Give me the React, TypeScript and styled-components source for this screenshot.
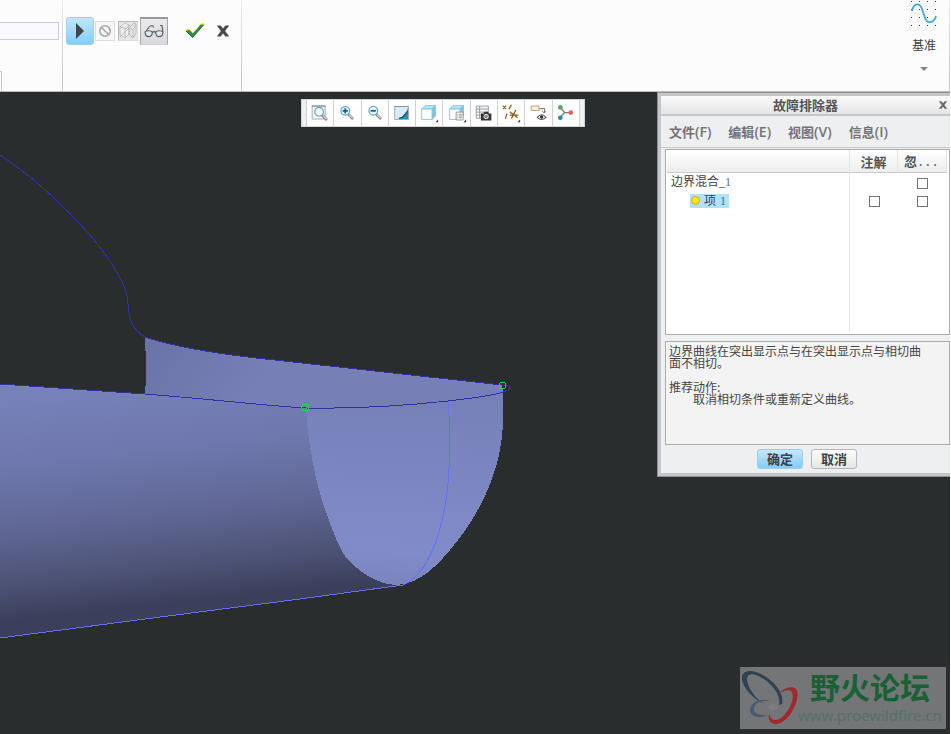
import React from "react";
import styled, { createGlobalStyle, css } from "styled-components";

const GlobalStyle = createGlobalStyle`
  * { box-sizing: border-box; }
  html, body, #root { height: 100%; }
  body {
    margin: 0;
    overflow: hidden;
    background: #fff;
    color: #3f3f3f;
    font-family: "Noto Sans CJK SC", sans-serif;
    font-size: 12px;
  }
  button, input { font: inherit; color: inherit; margin: 0; padding: 0; }
`;

const Page = styled.div`
  display: flex;
  flex-direction: column;
  height: 100%;
  padding-right: 1px;
`;

/* ---------- ribbon ---------- */

const Ribbon = styled.header`
  display: flex;
  flex: none;
  height: 92px;
  background: #fcfcfc;
  border-bottom: 1px solid #b9bcbe;
`;

const RibbonGroup = styled.div<{ $width?: number; $push?: boolean }>`
  display: flex;
  flex: none;
  align-items: flex-start;
  ${(p) => p.$width && `width: ${p.$width}px;`}
  ${(p) => p.$push && "margin-left: auto;"}
  border-right: 1px solid;
  border-image: linear-gradient(#ececef, #c9cacc 80%) 1;
`;

const FieldColumn = styled.div`
  display: flex;
  flex-direction: column;
  justify-content: space-between;
  align-items: flex-start;
  width: 59px;
  height: 91px;
  padding-top: 22px;
`;

const ReferenceField = styled.input`
  width: 100%;
  height: 18px;
  border: 1px solid #cccdd5;
  border-left: 0;
  background: #f9f7ff;
`;

const TabEdge = styled.div`
  width: 2px;
  height: 20px;
  border-top: 1px solid #c9cacc;
  border-right: 1px solid #c9cacc;
`;

const Commands = styled(RibbonGroup)`
  width: 179px;
  align-items: center;
  height: 91px;
  padding: 0 0 29px 3px;
`;

const CommandButton = styled.button<{ $kind: "primary" | "small" | "inset" | "pressed" | "plain" }>`
  display: grid;
  place-items: center;
  flex: none;
  width: 28px;
  height: 28px;
  border: 0;
  background: none;
  ${(p) => p.$kind === "primary" && css`
    border: 1px solid #97d0f0;
    border-radius: 3px;
    background: linear-gradient(#c3e6fb, #84cefb);
  `}
  ${(p) => p.$kind === "small" && css`
    width: 20px;
    height: 20px;
    margin: 0 3px 0 1px;
    border: 1px solid #dcdcde;
    background: #f6f6f7;
  `}
  ${(p) => p.$kind === "inset" && css`
    width: 20px;
    height: 20px;
    margin-right: 2px;
    border: 1px solid #b6b6b8;
    border-right-color: #dcdcde;
    border-bottom-color: #dcdcde;
    background: #e6e6e7;
  `}
  ${(p) => p.$kind === "pressed" && css`
    margin-right: 13px;
    border: 1px solid #a6a6a8;
    border-top: 2px solid #98989a;
    border-bottom-color: #d0d0d4;
    background: linear-gradient(#e9e9ea, #d9d9df);
  `}
`;

const DatumButton = styled.button`
  display: flex;
  flex-direction: column;
  align-items: center;
  width: 50px;
  border: 0;
  background: none;
  line-height: 16px;
`;

const DatumLabel = styled.span`
  margin: 10px 0 13px;
`;

/* ---------- graphics area ---------- */

const Viewport = styled.main`
  position: relative;
  flex: 1;
  min-height: 0;
  background: #292d2d;
`;

const Model = styled.svg`
  display: block;
  width: 100%;
  height: 100%;
`;

const ViewToolbar = styled.div`
  position: absolute;
  top: 7px;
  left: 301px;
  display: grid;
  grid-template-columns: 4px repeat(10, 1fr) 5px;
  width: 284px;
  height: 28px;
  border: 1px solid #d3d4d8;
  background: #eff0f3;
`;

const ToolButton = styled.button`
  display: grid;
  place-items: center;
  border: 0;
  border-left: 1px solid #cfd0d5;
  background: #fff;
`;

const ToolbarEnd = styled.span<{ $lined?: boolean }>`
  border-left: ${(p) => (p.$lined ? "1px solid #cfd0d5" : "0")};
`;

const Watermark = styled.div`
  position: absolute;
  right: 4px;
  bottom: 5px;
  display: flex;
  width: 206px;
  height: 62px;
  background: #737577;
`;

const WatermarkText = styled.div`
  display: flex;
  flex-direction: column;
  align-items: center;
  white-space: nowrap;
`;

const ForumName = styled.span`
  color: #1a6035;
  font-size: 30px;
  font-weight: 700;
  line-height: 38px;
`;

const ForumLink = styled.a`
  color: #54716b;
  font-family: "Noto Sans", sans-serif;
  font-size: 15px;
  line-height: 20px;
  text-decoration: none;
`;

/* ---------- troubleshooter dialog ---------- */

const Dialog = styled.section`
  position: absolute;
  top: 0;
  right: 0;
  display: flex;
  flex-direction: column;
  width: 293px;
  border: 1px solid #8e8f92;
  border-right: 0;
  background: #c5c6c9;
  padding: 3px 0 3px 3px;
`;

const TitleBar = styled.div`
  display: flex;
  align-items: center;
  height: 20px;
  padding-right: 2px;
  border-bottom: 2px solid #c5c6c9;
  background: linear-gradient(#fbfbfb, #e4e5e7);
`;

const Title = styled.h1`
  flex: 1;
  margin: 0;
  padding-left: 12px;
  color: #555457;
  font-size: 13px;
  font-weight: 700;
  line-height: 18px;
  text-align: center;
`;

const CloseButton = styled.button`
  display: grid;
  place-items: center;
  width: 10px;
  height: 18px;
  border: 0;
  background: none;
  opacity: 0.8;
`;

const MenuBar = styled.nav`
  display: flex;
  align-items: center;
  gap: 17px;
  height: 32px;
  padding-left: 8px;
  border-bottom: 1px solid #c6c8cb;
  background: #edeff1;
`;

const MenuItem = styled.button`
  border: 0;
  background: none;
  color: #757377;
  font-family: "Noto Sans CJK SC", sans-serif;
  font-size: 13px;
  font-weight: 700;
  line-height: 20px;
`;

const MenuKey = styled.span`
  font-family: "Open Sans", sans-serif;
  font-size: 14px;
  font-weight: 600;
`;

const DialogBody = styled.div`
  display: flex;
  flex-direction: column;
  padding: 1px 0 4px 4px;
  background: #edeff1;
`;

const TreeFrame = styled.div`
  height: 186px;
  padding: 0 2px 2px 1px;
  border: 1px solid #a9abae;
  background: #fff;
`;

const Tree = styled.table`
  width: 100%;
  height: 100%;
  border-collapse: separate;
  border-spacing: 0;
  table-layout: fixed;
`;

const HeadCell = styled.th<{ $width?: number; $start?: boolean }>`
  ${(p) => p.$width && `width: ${p.$width}px;`}
  height: 22px;
  padding: 2px 0 0 ${(p) => (p.$start ? 6 : 0)}px;
  border-right: 1px solid #e2e3e5;
  border-bottom: 1px solid #c9cbcd;
  background: linear-gradient(#fff, #ededee);
  color: #555457;
  font-size: 13px;
  font-weight: 700;
  line-height: 18px;
  text-align: ${(p) => (p.$start ? "left" : "center")};
  white-space: nowrap;
`;

const Dots = styled.span`
  font-family: "Liberation Mono", monospace;
  font-weight: 400;
  font-size: 12px;
`;

const Cell = styled.td<{ $ruled?: boolean; $indent?: number; $fill?: boolean }>`
  height: ${(p) => (p.$fill ? "auto" : "18px")};
  padding: 0 0 0 ${(p) => p.$indent ?? 0}px;
  border-right: ${(p) => (p.$ruled ? "1px solid #e8e8e9" : "0")};
  text-align: ${(p) => (p.$indent ? "left" : "center")};
  line-height: 14px;
  font-family: "Liberation Serif", "Noto Sans CJK SC", serif;
`;

const SelectedItem = styled.span`
  display: inline-flex;
  align-items: center;
  gap: 4px;
  height: 14px;
  padding: 0 3px 0 1px;
  background: #b1e2fc;
  vertical-align: middle;
`;

const Digit = styled.span`
  color: #3d6f9c;
`;

const Bullet = styled.span`
  width: 9px;
  height: 9px;
  border: 1px solid #f09a12;
  border-radius: 50%;
  background: #ffe81c;
`;

const Tick = styled.input`
  display: block;
  width: 11px;
  height: 11px;
  && { margin: 2px auto 0; }
  border: 1px solid #737375;
  background: #fff;
  appearance: none;
`;

const Message = styled.div`
  height: 104px;
  margin: 6px 0 4px;
  padding: 3px;
  border: 1px solid #a9abae;
  background: #f3f3f3;
  color: #454545;
  line-height: 12px;
`;

const Paragraph = styled.p<{ $indent?: boolean }>`
  max-width: 256px;
  margin: 0;
  padding-left: ${(p) => (p.$indent ? "24px" : "0")};
`;

const Advice = styled.div`
  margin-top: 12px;
`;

const Actions = styled.div`
  display: flex;
  justify-content: center;
  gap: 8px;
  padding-right: 1px;
`;

const ActionButton = styled.button<{ $primary?: boolean }>`
  width: 46px;
  height: 20px;
  border: 1px solid ${(p) => (p.$primary ? "#9dcbe8" : "#b5b6b8")};
  border-radius: 3px;
  background: ${(p) => (p.$primary ? "linear-gradient(#c5e7fb, #82cdfb)" : "linear-gradient(#fdfdfd, #e6e6e7)")};
  color: #3f4246;
  font-size: 13px;
  font-weight: 700;
  line-height: 18px;
`;

/* ---------- drawings ---------- */

const Cross = ({ size, width }: { size: number; width: number }) => (
  <svg width={size} height={size} viewBox="0 0 12 12">
    <path d="M1 1.500h3L6 4l2-2.500h3L7.600 6 11 10.500H8L6 8l-2 2.500H1L4.400 6z" fill="#48484a" stroke="#48484a" strokeWidth={width} />
  </svg>
);

const GlassesIcon = () => (
  <svg width="20" height="16" viewBox="0 0 20 16" fill="#dfe8ef" stroke="#5a5b5e" strokeWidth="1.200">
    <path d="M2 8C3.500 4.500 5.500 2 8 1.500c1.200 0 1.500 1 1.500 2" fill="none" />
    <path d="M18.800 7.500L18 1.500h-2" fill="none" />
    <path d="M1 8C2 6.300 7.500 6.300 8.300 8c.6 6-7 6.500-7.300 0zM11.700 8c.8-1.700 6.300-1.700 7.300 0-.3 6.500-7.900 6-7.300 0z" />
    <path d="M8.300 8.500c1-1 2.400-1 3.400 0" fill="none" />
  </svg>
);

const PatchIcon = () => (
  <svg width="18" height="18" viewBox="0 0 18 18" fill="none" stroke="#b3b3b5" strokeWidth=".8">
    <path d="M1 5l5-4 4 2-3 4-6-2v8l5 3 4-4V3M6 7v9" fill="#efeff0" />
    <path d="M10 6l5-5 2 1v9l-3 5-4-4zM14 8l3-6M14 8v8M10 6l4 2M1 15L13 3" />
  </svg>
);

const CheckIcon = () => (
  <svg width="20" height="16" viewBox="0 0 20 16">
    <path d="M1 8l3-1 4 4L16 1.500h3L7.500 14.500z" fill="#2d9352" stroke="#153f22" strokeWidth=".8" />
    <path d="M1 7.200l3-1M16 1h3" fill="none" stroke="#e7ed21" strokeWidth="1.500" />
    <path d="M4 6.500L8 10.300 16 1" fill="none" stroke="#c5dc2b" strokeWidth=".8" />
  </svg>
);

const DatumIcon = () => (
  <svg width="26" height="27" viewBox="0 0 26 27">
    {[1, 9, 17, 25].map((y) => [0, 8, 16, 24].map((x) => (
      <rect key={`${x}-${y}`} x={x} y={y} width="1" height="1" fill="#333" />
    )))}
    <path d="M1 11C3 2 9 3 11 9c3 9 4 14 8 13 3 0 5-2 6-6" fill="none" stroke="#3fabd6" strokeWidth="1.800" />
  </svg>
);

const Lens = ({ sign }: { sign: "plus" | "minus" | "none" }) => (
  <g>
    <path d="M11 11l5.500 5.500" stroke="#88898c" strokeWidth="3.200" />
    <path d="M12 11.500l4 4" stroke="#e3e3e4" strokeWidth="1.200" />
    <circle cx="7.500" cy="7" r="5" fill="#eefaff" stroke="#5b9dbc" strokeWidth="1.300" />
    {sign !== "none" && <path d={sign === "plus" ? "M4.500 7h6M7.500 4v6" : "M4.500 7h6"} stroke="#0b5d8e" strokeWidth="2" />}
  </g>
);

const Flyout = () => <path d="M21 18v3h-3z" fill="#333" />;

const CubeShape = () => (
  <g stroke="#86c1da">
    <path d="M2 6l4-4h12l-4 4z" fill="#b7e6f3" />
    <path d="M14 6l4-4v12l-4 4z" fill="#7cc3de" />
    <path d="M2 6h12v12H2z" fill="#fafeff" />
  </g>
);

const toolIcons: { name: string; icon: React.ReactNode }[] = [
  {
    name: "重新调整",
    icon: <><path d="M1.500 2.500h15v15h-15z" fill="#f5f5f5" stroke="#a3a3a5" /><path d="M1 2.500h16" stroke="#77787b" /><g transform="translate(2 2)"><Lens sign="none" /></g></>,
  },
  { name: "放大", icon: <g transform="translate(1 1)"><Lens sign="plus" /></g> },
  { name: "缩小", icon: <g transform="translate(1 1)"><Lens sign="minus" /></g> },
  {
    name: "重画",
    icon: <><path d="M2 3h16v15H2z" fill="#d5edf6" stroke="#9ca3a8" /><path d="M17.500 4v13.500H6C12 15 16 10 17.500 4z" fill="#328bb3" /><path d="M2 3h16" stroke="#898c90" /><path d="M7 16.500l4-1 6-7" fill="none" stroke="#1c4054" strokeWidth="1.300" /></>,
  },
  { name: "显示样式", icon: <><CubeShape /><Flyout /></> },
  {
    name: "已保存方向",
    icon: <><CubeShape /><path d="M9.500 9.500h8v9h-8z" fill="#fff" stroke="#888" /><path d="M11 12h1m1 0h3M11 14h1m1 0h3M11 16h1m1 0h3" stroke="#777" /><Flyout /></>,
  },
  {
    name: "视图管理器",
    icon: <><path d="M1.500 2.500h14v14h-14zM1.500 6h14M1.500 9.500h14M1.500 13h14M5.500 2.500v14" fill="#f5f5f5" stroke="#939597" /><path d="M7 11h3l1-2h4l1 2h3v8H7z" fill="#343538" /><circle cx="13" cy="14.500" r="2.500" fill="#888" stroke="#fff" /></>,
  },
  {
    name: "基准显示",
    icon: <><path d="M1 2l4 4M5 2L1 6M11 1L8 6M6 11l-2 6M9 9l9 7M9 13h10M16 7l-5 10" fill="none" stroke="#87601d" strokeWidth="1.500" /><Flyout /></>,
  },
  {
    name: "注释显示",
    icon: <><path d="M1.500 2.500h9v5h-9z" fill="#fff4d2" stroke="#a29572" /><path d="M11 5.500h6v4M14.500 8.500l2 2 2-2" fill="none" stroke="#555" /><path d="M8.500 15.500q5-6 10 0-5 5-10 0z" fill="#fff" stroke="#555" strokeWidth="1.200" /><circle cx="13.500" cy="15" r="2" fill="#333" /></>,
  },
  {
    name: "旋转中心",
    icon: <><path d="M4 4l5 6 7 0M9 10l-5 5" fill="none" stroke="#777" strokeWidth="1.500" /><circle cx="4" cy="4" r="2.700" fill="#53a45d" /><circle cx="4" cy="16" r="2.700" fill="#2c87b1" /><circle cx="16" cy="10" r="2.700" fill="#df635c" /></>,
  },
];

const lowerEdge = "C498 394 474 398 448 401C402 406 358 409 306 408";
const capLeft = "C308 445 316 485 326 512C333 532 338 545 346 558C360 572 376 584 396 585";
const upperEdge = "M145 337C175 347 225 355 275 360L502 385";

const ModelDrawing = () => (
  <Model viewBox="0 92 950 642" preserveAspectRatio="xMinYMin slice" role="img" aria-label="边界混合曲面">
    <defs>
      <linearGradient id="body" gradientUnits="userSpaceOnUse" x1="0" y1="384" x2="25" y2="619">
        <stop offset="0" stopColor="#7883bc" />
        <stop offset=".35" stopColor="#6e78ae" />
        <stop offset=".62" stopColor="#606795" />
        <stop offset=".85" stopColor="#4c5275" />
        <stop offset="1" stopColor="#3b3f5b" />
      </linearGradient>
      <linearGradient id="back" gradientUnits="userSpaceOnUse" x1="145" y1="340" x2="240" y2="410">
        <stop offset="0" stopColor="#6a73a6" />
        <stop offset="1" stopColor="#7680b7" />
      </linearGradient>
      <linearGradient id="cap" gradientUnits="userSpaceOnUse" x1="410" y1="395" x2="400" y2="586">
        <stop offset="0" stopColor="#7680b8" />
        <stop offset=".8" stopColor="#808bc9" />
        <stop offset="1" stopColor="#7a85bf" />
      </linearGradient>
    </defs>
    <g shapeRendering="crispEdges">
      <path d={`${upperEdge}L503 392${lowerEdge}L145 395L146 378V362L145 340z`} fill="url(#back)" />
      <path d={`M0 384L145 394L306 408${capLeft}L400 586L0 638z`} fill="url(#body)" />
      <path d={`M503 392${lowerEdge}${capLeft}C420 585 440 562 450 550C474 522 503 475 503 418z`} fill="url(#cap)" />
      <g fill="none">
        <path d="M0 155C45 184 100 240 119 276C125 288 128 294 128 304C129 318 131 329 145 337" stroke="#3430a0" />
        <path d={upperEdge} stroke="#3430a0" />
        <path d={`M502 385L508 386L511 388L508 390L503 392${lowerEdge}C280 407 220 400 145 394L0 384`} stroke="#3430a0" />
        <path d="M448 401L449 415V468C448 500 438 570 403 585L300 599L145 619L0 638" stroke="#6670f5" />
        <circle cx="502.500" cy="385.500" r="3.500" stroke="#22d35d" />
        <circle cx="305.500" cy="407.500" r="3.500" stroke="#22d35d" />
      </g>
    </g>
  </Model>
);

const WatermarkLogo = () => (
  <svg width="58" height="62" viewBox="0 0 58 62" fillRule="evenodd">
    <path d="M24 37C12 31 2 20 2 11C2 4 9 3 16 5C29 9 45 24 42 37L39 38C42 27 28 12 16 8C10 6 7 8 7 13C8 21 15 31 24 37z" fill="#2d4354" />
    <path d="M31 34C20 30 10 36 10 43C10 50 19 52 29 48C20 49 14 47 14 42C14 36 21 33 31 34z" fill="#465d70" />
    <path d="M38 27C44 21 52 18 56 22C60 27 56 40 49 49C43 56 36 59 32 56C29 54 28 51 29 47C31 53 35 55 41 51C49 45 55 32 52 25C50 22 44 23 38 27z" fill="#a1282f" />
    <ellipse cx="33" cy="40" rx="5" ry="3" fill="#7c7e80" />
  </svg>
);

const menus = [
  ["文件", "(F)"],
  ["编辑", "(E)"],
  ["视图", "(V)"],
  ["信息", "(I)"],
];

export default function App() {
  return (
    <>
      <GlobalStyle />
      <Page>
        <Ribbon>
          <RibbonGroup $width={63}>
            <FieldColumn>
              <ReferenceField aria-label="参考" />
              <TabEdge />
            </FieldColumn>
          </RibbonGroup>
          <Commands>
            <CommandButton $kind="primary" aria-label="继续">
              <svg width="10" height="16" viewBox="0 0 10 16"><path d="M1 0l8 8-8 8z" fill="#424447" /></svg>
            </CommandButton>
            <CommandButton $kind="small" aria-label="无预览">
              <svg width="14" height="14" viewBox="0 0 14 14" fill="none" stroke="#a6a6a8" strokeWidth="1.600"><circle cx="7" cy="7" r="5.200" /><path d="M3.500 3.500l7 7" /></svg>
            </CommandButton>
            <CommandButton $kind="inset" aria-label="分离预览"><PatchIcon /></CommandButton>
            <CommandButton $kind="pressed" aria-label="校验"><GlassesIcon /></CommandButton>
            <CommandButton $kind="plain" aria-label="应用"><CheckIcon /></CommandButton>
            <CommandButton $kind="plain" aria-label="放弃"><Cross size={14} width={0.3} /></CommandButton>
          </Commands>
          <RibbonGroup $push>
            <DatumButton>
              <DatumIcon />
              <DatumLabel>基准</DatumLabel>
              <svg width="8" height="5" viewBox="0 0 8 5"><path d="M0 1h8L4 5z" fill="#858588" /></svg>
            </DatumButton>
          </RibbonGroup>
        </Ribbon>

        <Viewport>
          <ModelDrawing />

          <ViewToolbar role="toolbar">
            <ToolbarEnd />
            {toolIcons.map(({ name, icon }) => (
              <ToolButton key={name} aria-label={name}>
                <svg width="20" height="20" viewBox="-1 -1 23 23">{icon}</svg>
              </ToolButton>
            ))}
            <ToolbarEnd $lined />
          </ViewToolbar>

          <Dialog role="dialog" aria-labelledby="dialog-title">
            <TitleBar>
              <Title id="dialog-title">故障排除器</Title>
              <CloseButton aria-label="关闭"><Cross size={10} width={0} /></CloseButton>
            </TitleBar>
            <MenuBar>
              {menus.map(([label, key]) => (
                <MenuItem key={key}>{label}<MenuKey>{key}</MenuKey></MenuItem>
              ))}
            </MenuBar>
            <DialogBody>
              <TreeFrame>
                <Tree>
                  <thead>
                    <tr>
                      <HeadCell aria-label="名称" />
                      <HeadCell $width={48}>注解</HeadCell>
                      <HeadCell $width={49} $start>忽<Dots>...</Dots></HeadCell>
                    </tr>
                  </thead>
                  <tbody>
                    <tr>
                      <Cell $indent={4} $ruled>边界混合_<Digit>1</Digit></Cell>
                      <Cell />
                      <Cell><Tick type="checkbox" aria-label="忽略 边界混合_1" /></Cell>
                    </tr>
                    <tr>
                      <Cell $indent={23} $ruled>
                        <SelectedItem><Bullet />项 <Digit>1</Digit></SelectedItem>
                      </Cell>
                      <Cell><Tick type="checkbox" aria-label="注解 项 1" /></Cell>
                      <Cell><Tick type="checkbox" aria-label="忽略 项 1" /></Cell>
                    </tr>
                    <tr>
                      <Cell $ruled $fill />
                      <Cell $fill />
                      <Cell $fill />
                    </tr>
                  </tbody>
                </Tree>
              </TreeFrame>
              <Message>
                <Paragraph>边界曲线在突出显示点与在突出显示点与相切曲面不相切。</Paragraph>
                <Advice>
                  <Paragraph>推荐动作:</Paragraph>
                  <Paragraph $indent>取消相切条件或重新定义曲线。</Paragraph>
                </Advice>
              </Message>
              <Actions>
                <ActionButton $primary>确定</ActionButton>
                <ActionButton>取消</ActionButton>
              </Actions>
            </DialogBody>
          </Dialog>

          <Watermark>
            <WatermarkLogo />
            <WatermarkText>
              <ForumName>野火论坛</ForumName>
              <ForumLink href="#">www.proewildfire.cn</ForumLink>
            </WatermarkText>
          </Watermark>
        </Viewport>
      </Page>
    </>
  );
}
